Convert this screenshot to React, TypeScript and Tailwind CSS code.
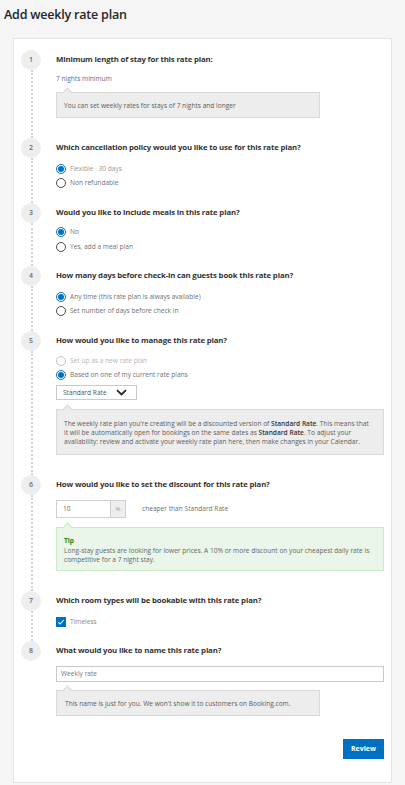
import React from 'react';

const font = { fontFamily: '"Open Sans", "Noto Sans", sans-serif' };

const Radio = ({ checked, disabled, label }: { checked?: boolean; disabled?: boolean; label: React.ReactNode }) => (
    <div className="flex h-[14px] items-center gap-[4px]">
        {checked ? (
            <span className="flex h-[10px] w-[10px] items-center justify-center rounded-full border border-[#0071c2] bg-white">
                <span className="h-[6px] w-[6px] rounded-full bg-[#0071c2]" />
            </span>
        ) : (
            <span className={`h-[10px] w-[10px] rounded-full border bg-white ${disabled ? 'border-[#c4c4c4]' : 'border-[#4d4d4d]'}`} />
        )}
        <span className={`text-[6.6px] ${disabled ? 'text-[#b5b5b5]' : 'text-[#707070]'}`}>{label}</span>
    </div>
);

const Note = ({ children, className = '' }: { children: React.ReactNode; className?: string }) => (
    <div className={`relative border border-[#d9d9d9] bg-[#ededed] text-[6.6px] leading-[9px] text-[#5c5c5c] ${className}`}>
        <span className="absolute -top-[4px] left-[7px] h-[7px] w-[7px] rotate-45 border-l border-t border-[#d9d9d9] bg-[#ededed]" />
        <div className="relative">{children}</div>
    </div>
);

const Step = ({ n, title, last, children, pb }: { n: number; title: string; last?: boolean; children: React.ReactNode; pb: string }) => (
    <div className="flex gap-[15px]">
        <div className="flex w-5 shrink-0 flex-col">
            <div className="flex h-5 w-5 shrink-0 items-center justify-center rounded-full bg-[#eeeeee] text-[7px] font-semibold text-[#6b6b6b]">
                {n}
            </div>
            {!last && <div className="ml-[10px] flex-1 border-l-2 border-dotted border-[#d4d4d4]" />}
        </div>
        <div className={`min-w-0 flex-1 ${pb}`}>
            <div className="flex h-5 items-center text-[7.8px] font-bold tracking-[-0.15px] text-[#333333]">{title}</div>
            {children}
        </div>
    </div>
);

export default function App() {
    return (
        <div className="min-h-[785px] w-[405px] bg-[#f5f5f5]" style={font}>
            <h1 className="flex h-[38px] items-center pl-[4px] pb-[8px] text-[12.5px] font-semibold tracking-[-0.2px] text-[#262626]">
                Add weekly rate plan
            </h1>
            <div className="mx-[13px] border border-[#e3e3e3] bg-white px-[7px] pt-[11px] pb-[23px]">
                <Step n={1} title="Minimum length of stay for this rate plan:" pb="pb-[20px]">
                    <div className="mt-[2px] flex h-[14px] items-center text-[6.6px] text-[#5b6e8f]">7 nights minimum</div>
                    <Note className="mt-[6px] flex h-[26px] w-[264px] items-center pl-[7px]">
                        You can set weekly rates for stays of 7 nights and longer
                    </Note>
                </Step>
                <Step n={2} title="Which cancellation policy would you like to use for this rate plan?" pb="pb-[13px]">
                    <div className="mt-[4px]">
                        <Radio checked label={<span className="text-[#9a9a9a]">Flexible · 30 days</span>} />
                        <Radio label="Non refundable" />
                    </div>
                </Step>
                <Step n={3} title="Would you like to include meals in this rate plan?" pb="pb-[12px]">
                    <div className="mt-[2px]">
                        <Radio checked label="No" />
                        <div className="mt-[1px]">
                            <Radio label="Yes, add a meal plan" />
                        </div>
                    </div>
                </Step>
                <Step n={4} title="How many days before check-in can guests book this rate plan?" pb="pb-[13px]">
                    <div className="mt-[4px]">
                        <Radio checked label="Any time (this rate plan is always available)" />
                        <Radio label="Set number of days before check in" />
                    </div>
                </Step>
                <Step n={5} title="How would you like to manage this rate plan?" pb="pb-[20px]">
                    <div className="mt-[3px]">
                        <Radio disabled label="Set up as a new rate plan" />
                        <Radio checked label="Based on one of my current rate plans" />
                    </div>
                    <div className="mt-[3px] flex h-[15px] w-[81px] items-center justify-between border border-[#c9c9c9] bg-white pl-[6px] pr-[9px] text-[6.6px] text-[#555555]">
                        <span>Standard Rate</span>
                        <svg width="11" height="7" viewBox="0 0 11 7">
                            <path d="M1 1.2 L5.5 5.5 L10 1.2" fill="none" stroke="#262626" strokeWidth="1.8" />
                        </svg>
                    </div>
                    <Note className="mt-[9px] h-[46px] pt-[9px] pl-[7px] pr-[14px]">
                        The weekly rate plan you're creating will be a discounted version of{' '}
                        <b className="font-semibold text-[#333333]">Standard Rate</b>. This means that it will be automatically open for bookings on the
                        same dates as <b className="font-semibold text-[#333333]">Standard Rate</b>. To adjust your availability: review and activate
                        your weekly rate plan here, then make changes in your Calendar.
                    </Note>
                </Step>
                <Step n={6} title="How would you like to set the discount for this rate plan?" pb="pb-[20px]">
                    <div className="mt-[5px] flex h-[18px] items-center">
                        <div className="flex h-full w-[55px] items-center border border-[#cfcfcf] pl-[6px] text-[6.6px] text-[#666666]">10</div>
                        <div className="flex h-full w-[15px] items-center justify-center border border-l-0 border-[#cfcfcf] bg-[#eeeeee] text-[6px] text-[#999999]">
                            %
                        </div>
                        <span className="ml-[16px] text-[6.6px] text-[#707070]">cheaper than Standard Rate</span>
                    </div>
                    <div className="relative mt-[9px] h-[44px] border border-[#c9e9c9] bg-[#e9f6e9] pl-[7px] pr-[8px] pt-[8px] text-[6.6px] leading-[9.5px] text-[#666666]">
                        <span className="absolute -top-[4px] left-[7px] h-[7px] w-[7px] rotate-45 border-l border-t border-[#c9e9c9] bg-[#e9f6e9]" />
                        <div className="relative">
                            <div className="font-bold text-[#1b8a1b]">Tip</div>
                            Long-stay guests are looking for lower prices. A 10% or more discount on your cheapest daily rate is competitive for a 7
                            night stay.
                        </div>
                    </div>
                </Step>
                <Step n={7} title="Which room types will be bookable with this rate plan?" pb="pb-[12px]">
                    <div className="mt-[4px] flex h-[14px] items-center gap-[4px]">
                        <span className="flex h-[10px] w-[10px] items-center justify-center bg-[#0071c2]">
                            <svg width="8" height="8" viewBox="0 0 8 8">
                                <path d="M1.3 4.3 L3.1 6 L6.8 2" fill="none" stroke="white" strokeWidth="1.1" />
                            </svg>
                        </span>
                        <span className="text-[6.6px] text-[#8a8a8a]">Timeless</span>
                    </div>
                </Step>
                <Step n={8} title="What would you like to name this rate plan?" last pb="pb-0">
                    <div className="mt-[5px] flex h-[16px] items-center border border-[#c9c9c9] pl-[4px] text-[6.6px] text-[#777777]">
                        Weekly rate
                    </div>
                    <Note className="mt-[8px] flex h-[26px] w-[264px] items-center pl-[8px]">
                        This name is just for you. We won't show it to customers on Booking.com.
                    </Note>
                    <div className="mt-[23px] flex justify-end">
                        <button className="h-5 w-[41px] bg-[#0071c2] text-[7px] font-bold text-white">Review</button>
                    </div>
                </Step>
            </div>
        </div>
    );
}
